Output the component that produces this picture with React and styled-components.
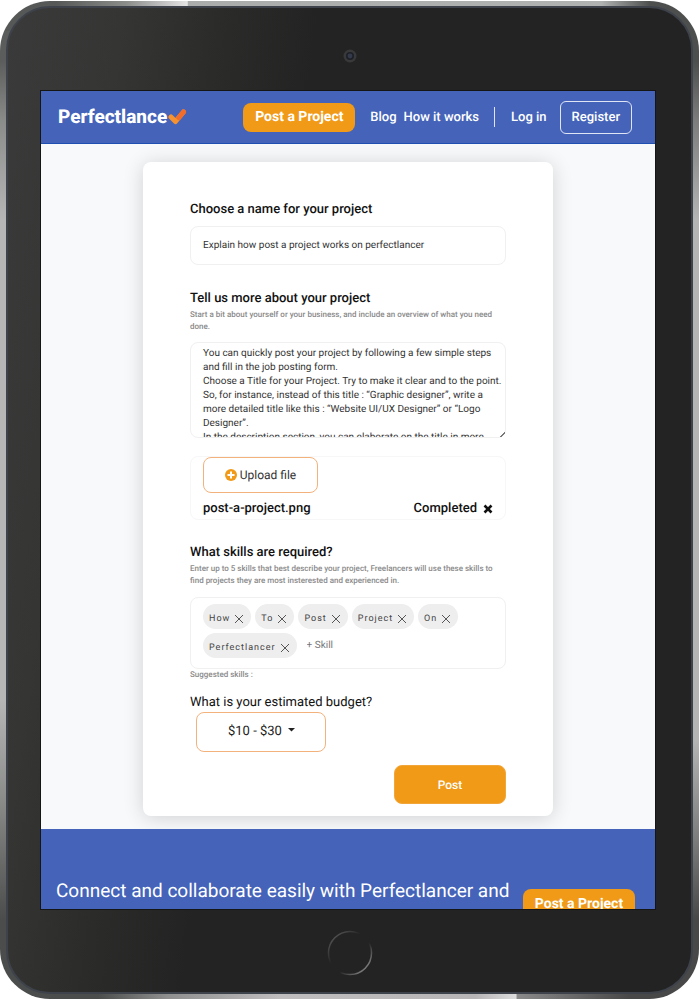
import React from "react";
import styled, { createGlobalStyle, css } from "styled-components";

const Global = createGlobalStyle`
  *, *::before, *::after { box-sizing: border-box; }
  body { margin: 0; background: #fff; color: #111; font-family: Roboto, "Liberation Sans", sans-serif; text-rendering: geometricPrecision; }
  button, input, textarea, select { font-family: inherit; color: inherit; margin: 0; text-rendering: inherit; }
  h2, p, ul { margin: 0; padding: 0; font-weight: 400; }
  a { color: inherit; text-decoration: none; }
`;

const Device = styled.div`
  display: flex;
  height: 100vh;
  padding: 1px 0;
`;
const Frame = styled.div`
  flex: 1;
  display: flex;
  padding: 5px 6px;
  border-radius: 50px;
  background:
    linear-gradient(90deg, #555856 8%, #8a8c8a 18%, #e4e4e4 26.8%, #aaacab 26.9%, #b0b2b1 86%, #4c4f4d 93%) top / 100% 30px no-repeat,
    linear-gradient(90deg, #4a4d4b 14%, #8f8f8f 24%, #c0bdbe 40%, #b8b5b6 68%, #dcdcdc 73.8%, #8a8a8a 74%, #484848 90%) bottom / 100% 30px no-repeat,
    linear-gradient(180deg, #5a5d5b 6%, #8a8c8a 12%, #b6b6b6 22%, #b6b6b6 70%, #8a8c8a 80%, #4a4d4b 92%) left / 50% 100% no-repeat,
    linear-gradient(180deg, #4c4f4d 6%, #7c7c7c 12%, #b4b4b4 22%, #b4b4b4 74%, #7c7c7c 84%, #484848 92%) right / 50% 100% no-repeat;
`;
const Bezel = styled.div`
  flex: 1;
  min-width: 0;
  display: flex;
  flex-direction: column;
  padding: 0 36px 0 33px;
  border: 2px solid #3e424b;
  border-radius: 44px;
  background: linear-gradient(98deg, #3a3a3a 0%, #353534 14%, #2b2b2a 26%, #232323 38%, #232323 100%);
`;
const Edge = styled.div`
  flex: none;
  height: 83px;
  padding: ${(p) => p.$top} 0 0 3px;
  display: flex;
  align-items: center;
  justify-content: center;
`;
const Screen = styled.div`
  flex: 1;
  min-height: 0;
  overflow: hidden;
  background: #f7f9fa;
  box-shadow: 0 0 0 1px #151515;
`;

const Header = styled.header`
  display: flex;
  align-items: center;
  height: 53px;
  padding: 0 23px 0 17px;
  background: #4463b9;
  border-bottom: 1px solid #1f4fb0;
  color: #fff;
`;
const Logo = styled.a`
  display: flex;
  align-items: center;
  margin-right: auto;
  font-size: 19px;
  line-height: 24px;
  font-weight: 800;
`;
const Nav = styled.nav`
  display: flex;
  align-items: center;
  font-size: 13px;
  font-weight: 500;
`;
const NavLink = styled.a`
  margin-left: ${(p) => p.$gap};
`;
const Divider = styled.span`
  width: 1px;
  height: 20px;
  margin-left: 15px;
  background: #dfe5f5;
`;
const RegisterLink = styled.a`
  display: flex;
  align-items: center;
  height: 33px;
  margin-left: 13px;
  padding: 0 11px;
  border: 1px solid #dfe5f5;
  border-radius: 6px;
`;
const CtaButton = styled.button`
  flex: none;
  width: 112px;
  height: 29px;
  padding: 0;
  border: 0;
  border-radius: 8px;
  background: #f09a18;
  color: #fff;
  font-size: 14px;
  font-weight: 700;
`;

const Main = styled.main`
  padding: 18px 102px 13px;
`;
const Card = styled.form`
  display: flex;
  flex-direction: column;
  padding: 40px 47px 12px;
  border-radius: 8px;
  background: #fff;
  box-shadow: 0 2px 20px rgba(0, 0, 0, 0.16);
`;
const Label = styled.label`
  margin-top: ${(p) => (p.$light ? "14px" : "0")};
  font-size: 13px;
  line-height: 16px;
  font-weight: ${(p) => (p.$light ? 400 : 500)};
  color: #111;
`;
const Hint = styled.p`
  padding-top: ${(p) => (p.$intro ? "2px" : "0")};
  font-size: 8px;
  line-height: 12px;
  font-weight: 500;
  color: #8a8a8a;
`;
const box = css`
  border: 1px solid #f0f0f0;
  border-radius: 8px;
  background: #fff;
`;
const TextInput = styled.input`
  ${box}
  height: 39px;
  margin: 8px 0 26px;
  padding: 0 12px;
  font-size: 10px;
  color: #333;
`;
const TextArea = styled.textarea`
  ${box}
  display: block;
  height: 96px;
  margin: 9px 0 18px;
  padding: 4px 0 0 12px;
  overflow: hidden;
  resize: vertical;
  font-size: 10px;
  line-height: 14px;
  color: #333;
  &::-webkit-resizer {
    background: linear-gradient(135deg, transparent 82%, #777 82%, #777 88%, transparent 88%);
  }
`;
const UploadBox = styled.div`
  ${box}
  border-color: #f7f7f7;
  height: 64px;
  margin-bottom: 25px;
  padding: 0 12px;
`;
const OutlineButton = styled.button`
  display: flex;
  align-items: center;
  justify-content: center;
  gap: 3px;
  width: 115px;
  height: 36px;
  padding: 0;
  border: 1px solid #f3b27c;
  border-radius: 8px;
  background: #fff;
  font-size: 12px;
  color: #333;
`;
const FileRow = styled.div`
  display: flex;
  align-items: center;
  margin-top: 8px;
  font-size: 13px;
  line-height: 16px;
  font-weight: 500;
  color: #111;
`;
const Status = styled.span`
  margin-left: auto;
`;
const IconButton = styled.button`
  display: flex;
  padding: 0;
  border: 0;
  background: none;
  margin-left: ${(p) => p.$gap || "0"};
`;
const Skills = styled.ul`
  ${box}
  display: flex;
  flex-wrap: wrap;
  align-content: flex-start;
  gap: 4px;
  height: 72px;
  margin-top: 10px;
  padding: 6px 12px;
  list-style: none;
`;
const Chip = styled.li`
  display: flex;
  align-items: center;
  gap: 4px;
  height: 25px;
  padding: 4px 7px 0 6px;
  border-radius: 13px;
  background: #eee;
  font-size: 9px;
  letter-spacing: 1px;
  color: #444;
`;
const SkillItem = styled.li`
  display: flex;
  flex: 1;
  padding-left: 6px;
`;
const SkillInput = styled.input`
  width: 60px;
  height: 25px;
  padding: 0;
  border: 0;
  background: none;
  font-size: 10px;
  &::placeholder { color: #777; opacity: 1; }
`;
const Budget = styled.select`
  appearance: none;
  width: 130px;
  height: 40px;
  margin: 1px 0 13px 6px;
  padding: 0 12px 2px 31px;
  border: 1px solid #f3b27c;
  border-radius: 8px;
  background: #fff;
  font-size: 13px;
  color: #222;
`;
const SelectWrap = styled.div`
  display: grid;
  justify-content: start;
  & > * { grid-area: 1 / 1; }
  & > svg { margin: 17px 0 0 98px; pointer-events: none; z-index: 1; }
`;
const SubmitButton = styled.button`
  align-self: flex-end;
  width: 112px;
  height: 39px;
  border: 1px solid #f2a63a;
  border-radius: 8px;
  background: #f09a18;
  color: #fff;
  font-size: 12px;
  font-weight: 500;
`;
const Banner = styled.section`
  display: flex;
  align-items: flex-start;
  justify-content: space-between;
  padding: 49px 20px 40px 15px;
  background: #4463b9;
  color: #fff;
`;
const BannerText = styled.p`
  flex: 1;
  font-size: 19px;
  line-height: 26px;
`;
const BannerCta = styled.div`
  margin-top: 11px;
`;

const Cross = () => (
  <svg width="10" height="10" viewBox="0 0 10 10" aria-hidden="true">
    <path d="M1 1L9 9M9 1L1 9" stroke="#444" strokeWidth="0.9" fill="none" />
  </svg>
);

const skills = ["How", "To", "Post", "Project", "On", "Perfectlancer"];
const brief = `You can quickly post your project by following a few simple steps and fill in the job posting form.
Choose a Title for your Project. Try to make it clear and to the point.
So, for instance, instead of this title : “Graphic designer”, write a more detailed title like this : “Website UI/UX Designer” or “Logo Designer”.
In the description section, you can elaborate on the title in more detail.`;

export default function App() {
  return (
    <Device>
      <Global />
      <Frame>
        <Bezel>
          <Edge $top="13px">
            <svg width="14" height="14" viewBox="0 0 14 14" aria-hidden="true">
              <circle cx="7" cy="7" r="6.5" fill="#393939" />
              <circle cx="7" cy="7" r="4" fill="#1d2028" />
              <circle cx="7" cy="7" r="2.4" fill="#343a4a" />
            </svg>
          </Edge>
          <Screen>
            <Header>
              <Logo href="#">
                Perfectlance
                <svg width="20" height="18" viewBox="0 0 20 18" aria-hidden="true">
                  <path d="M4 9L8.500 13.500L16.500 4" fill="none" stroke="#f7922e" strokeWidth="5" strokeLinecap="round" strokeLinejoin="round" />
                  <path d="M11.800 9.600L16.500 4" fill="none" stroke="#f26c2b" strokeWidth="5" strokeLinecap="round" />
                </svg>
              </Logo>
              <Nav>
                <CtaButton type="button">Post a Project</CtaButton>
                <NavLink href="#" $gap="15px">Blog</NavLink>
                <NavLink href="#" $gap="7px">How it works</NavLink>
                <Divider />
                <NavLink href="#" $gap="16px">Log in</NavLink>
                <RegisterLink href="#">Register</RegisterLink>
              </Nav>
            </Header>
            <Main>
              <Card onSubmit={(e) => e.preventDefault()}>
                <Label htmlFor="name">Choose a name for your project</Label>
                <TextInput id="name" defaultValue="Explain how post a project works on perfectlancer" />
                <Label htmlFor="brief">Tell us more about your project</Label>
                <Hint $intro>Start a bit about yourself or your business, and include an overview of what you need done.</Hint>
                <TextArea id="brief" defaultValue={brief} />
                <UploadBox>
                  <OutlineButton type="button">
                    <svg width="12" height="12" viewBox="0 0 12 12" aria-hidden="true">
                      <circle cx="6" cy="6" r="6" fill="#f09a18" />
                      <path d="M6 2.500V9.500M2.500 6H9.500" stroke="#fff" strokeWidth="2" />
                    </svg>
                    Upload file
                  </OutlineButton>
                  <FileRow>
                    post-a-project.png
                    <Status>Completed</Status>
                    <IconButton type="button" aria-label="Remove file" $gap="6px">
                      <svg width="10" height="10" viewBox="0 0 10 10" aria-hidden="true">
                        <path d="M1.500 1.500L8.500 8.500M8.500 1.500L1.500 8.500" stroke="#111" strokeWidth="2.600" />
                      </svg>
                    </IconButton>
                  </FileRow>
                </UploadBox>
                <Label htmlFor="skill">What skills are required?</Label>
                <Hint $intro>Enter up to 5 skills that best describe your project, Freelancers will use these skills to find projects they are most insterested and experienced in.</Hint>
                <Skills>
                  {skills.map((s) => (
                    <Chip key={s}>
                      {s}
                      <IconButton type="button" aria-label={`Remove ${s}`}><Cross /></IconButton>
                    </Chip>
                  ))}
                  <SkillItem><SkillInput id="skill" placeholder="+ Skill" /></SkillItem>
                </Skills>
                <Hint>Suggested skills :</Hint>
                <Label htmlFor="budget" $light>What is your estimated budget?</Label>
                <SelectWrap>
                  <Budget id="budget" defaultValue="a">
                    <option value="a">$10 - $30</option>
                  </Budget>
                  <svg width="7" height="4" viewBox="0 0 7 4" aria-hidden="true"><path d="M0 0H7L3.500 3.500Z" fill="#222" /></svg>
                </SelectWrap>
                <SubmitButton type="submit">Post</SubmitButton>
              </Card>
            </Main>
            <Banner>
              <BannerText>Connect and collaborate easily with Perfectlancer and</BannerText>
              <BannerCta><CtaButton type="button">Post a Project</CtaButton></BannerCta>
            </Banner>
          </Screen>
          <Edge $top="4px">
            <svg width="46" height="46" viewBox="0 0 46 46" aria-hidden="true">
              <defs>
                <linearGradient id="ring" x1="0" y1="0" x2="1" y2="1">
                  <stop offset="0" stopColor="#666" />
                  <stop offset="0.4" stopColor="#232323" />
                  <stop offset="0.6" stopColor="#232323" />
                  <stop offset="1" stopColor="#aaa" />
                </linearGradient>
              </defs>
              <circle cx="23" cy="23" r="21.500" fill="none" stroke="url(#ring)" strokeWidth="1.500" />
            </svg>
          </Edge>
        </Bezel>
      </Frame>
    </Device>
  );
}
